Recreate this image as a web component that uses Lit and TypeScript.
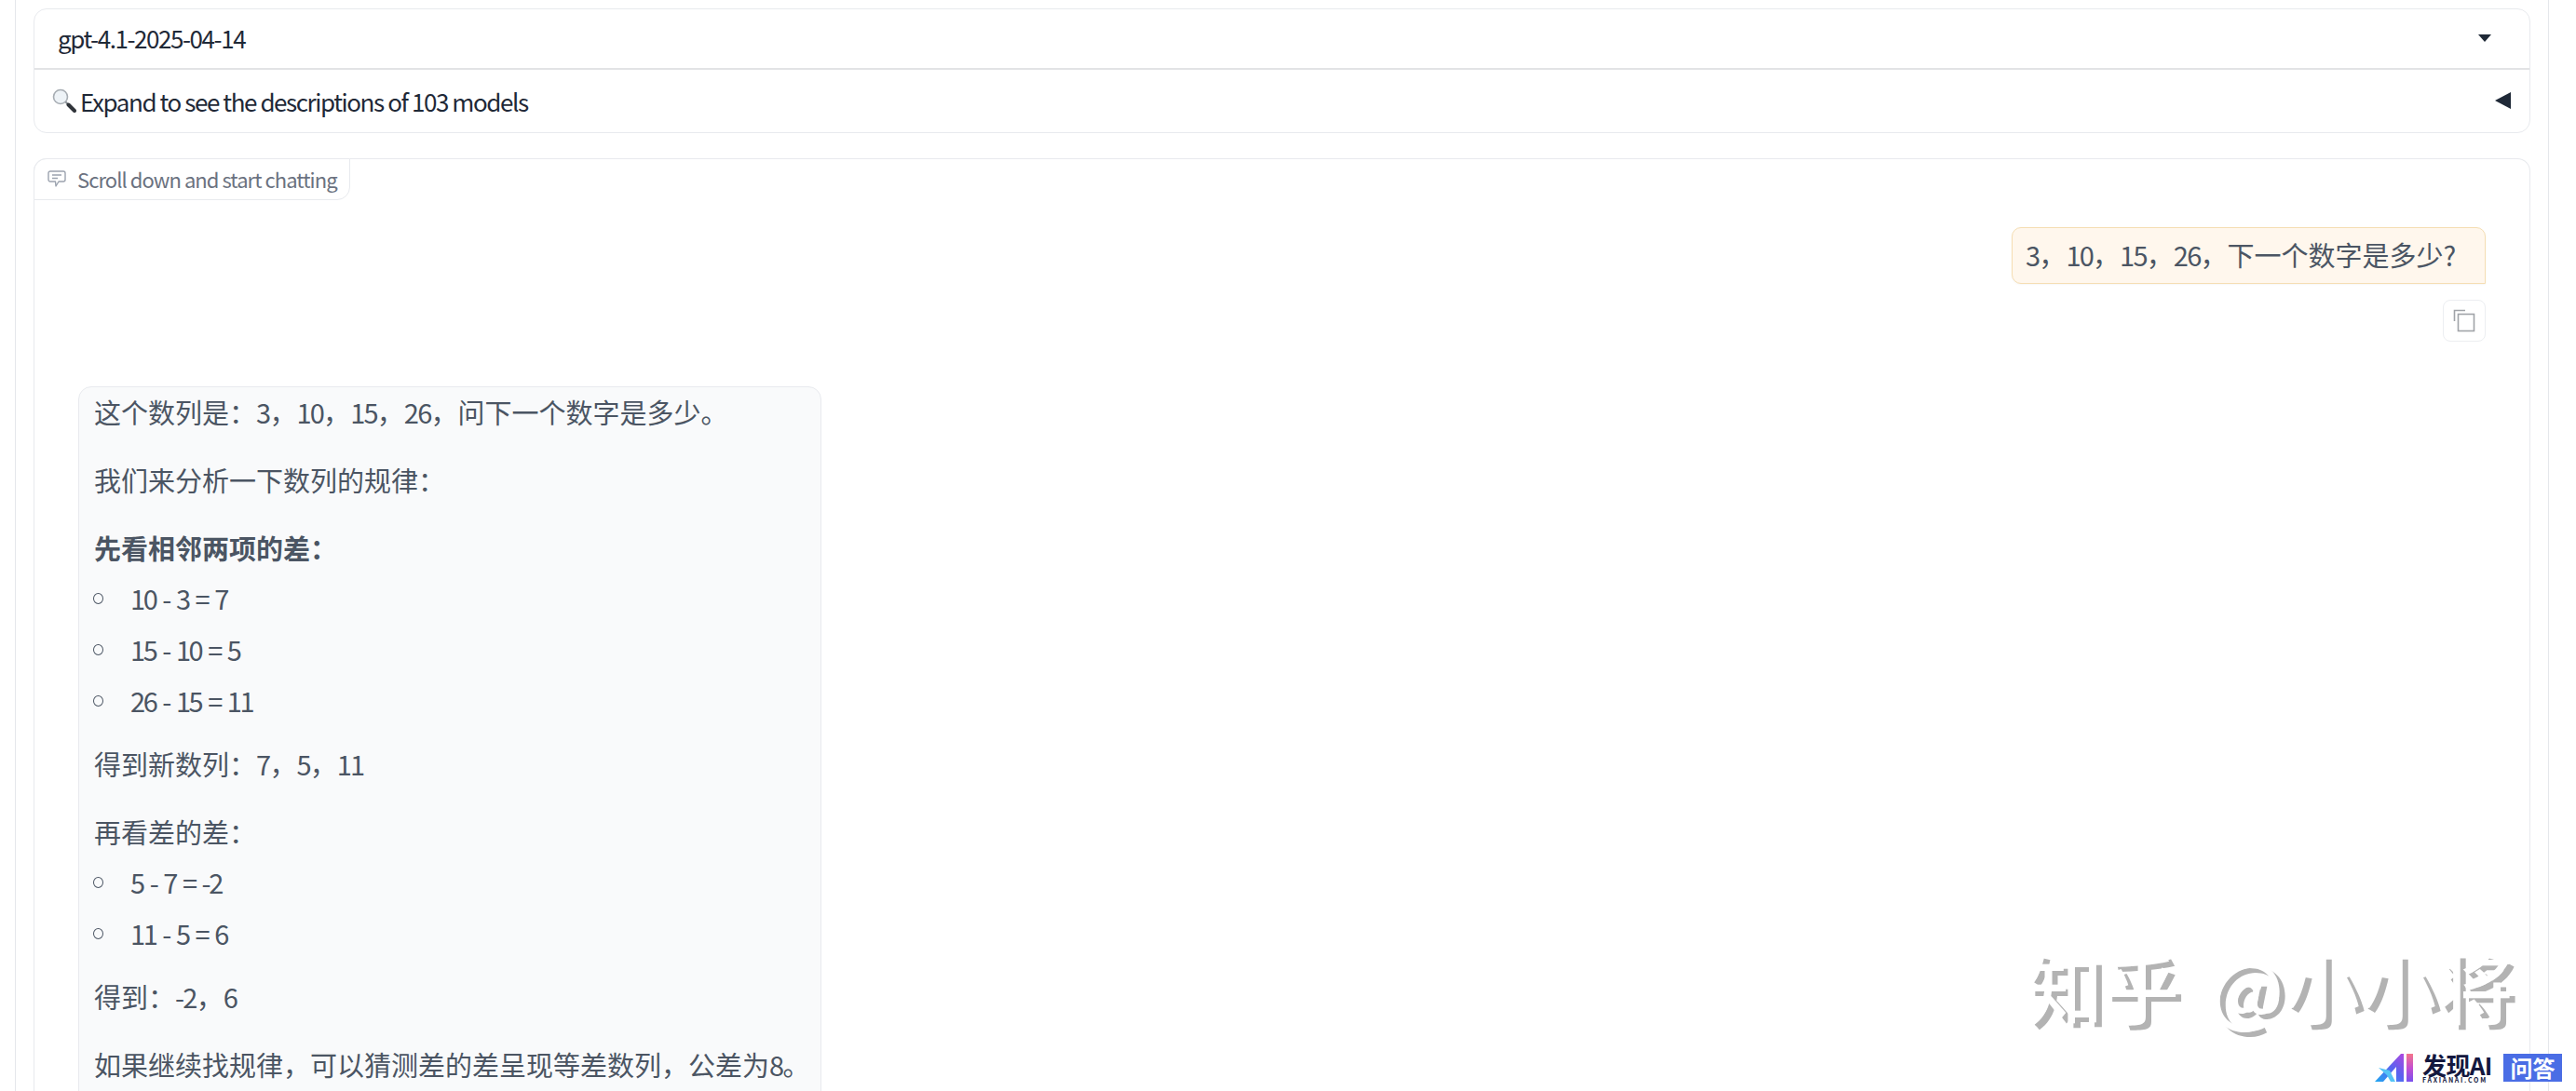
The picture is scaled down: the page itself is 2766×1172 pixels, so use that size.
import { LitElement, html, css } from "lit";
import { customElement } from "lit/decorators.js";

const runs = (text: string) =>
  text
    .split(/([\x20-\x7e]+)/)
    .map((part, i) => (i % 2 ? html`<span class="n">${part}</span>` : part));

@customElement("app-root")
export class AppRoot extends LitElement {
  static styles = css`
    :host {
      display: block;
      height: 1172px;
      overflow: hidden;
      position: relative;
      background: #fff;
      font-family: "Noto Sans CJK SC", "Noto Sans", sans-serif;
      color: #1f2937;
    }
    .page {
      box-sizing: border-box;
      margin: 0 29px 0 16px;
      padding: 9px 19px 0 19px;
      height: 1172px;
      border-left: 1px solid #e5e7eb;
      border-right: 1px solid #e5e7eb;
      display: flex;
      flex-direction: column;
      gap: 27px;
    }
    .card {
      border: 1px solid #e8eaee;
      border-radius: 14px;
      background: #fff;
    }
    .row {
      display: flex;
      align-items: center;
      justify-content: space-between;
      box-sizing: border-box;
      font-size: 26px;
      letter-spacing: -0.055em;
      color: #1f2937;
    }
    .select {
      height: 65px;
      padding: 0 41px 2px 25px;
      border-bottom: 2px solid #e2e3e5;
    }
    .expand {
      height: 67px;
      padding: 0 20px 1px 19px;
    }
    .label {
      display: flex;
      align-items: center;
      gap: 4px;
    }
    .chat {
      flex: 1;
      display: flex;
      flex-direction: column;
      position: relative;
      border-bottom: none;
      border-bottom-left-radius: 0;
      border-bottom-right-radius: 0;
      padding: 73px 47px 0 47px;
    }
    .tab {
      position: absolute;
      left: -1px;
      top: -1px;
      height: 45px;
      width: 340px;
      box-sizing: border-box;
      display: flex;
      align-items: center;
      gap: 12px;
      padding: 0 0 2px 14px;
      font-size: 22px;
      letter-spacing: -0.043em;
      white-space: nowrap;
      color: #6b7280;
      border: 1px solid #e8eaee;
      border-radius: 14px 0 14px 0;
      background: #fff;
    }
    .user-wrap {
      align-self: flex-end;
      display: flex;
      flex-direction: column;
      align-items: flex-end;
      gap: 17px;
    }
    .user {
      box-sizing: border-box;
      height: 61px;
      width: 509px;
      padding: 0 14px 3px;
      display: flex;
      align-items: center;
      font-size: 29px;
      white-space: pre;
      color: #4b5563;
      background: #fff7ed;
      border: 1px solid #f5deb3;
      border-radius: 10px 10px 0 10px;
      box-shadow: 0 1px 2px rgba(0, 0, 0, 0.04);
    }
    .n {
      letter-spacing: -0.06em;
    }
    .copy {
      width: 46px;
      height: 45px;
      box-sizing: border-box;
      border: 1px solid #eceef1;
      border-radius: 8px;
      display: flex;
      align-items: center;
      justify-content: center;
    }
    .bot {
      margin-top: 48px;
      width: 798px;
      box-sizing: border-box;
      padding: 0 16px;
      background: #f9fafb;
      border: 1px solid #e8eaee;
      border-radius: 14px 14px 0 0;
      font-size: 29px;
      line-height: 42px;
      color: #4b5563;
      flex: 1;
    }
    .bot p {
      margin: 31px 0;
      white-space: nowrap;
    }
    .bot p:first-child {
      margin-top: 5px;
    }
    .bot ul + p {
      margin-top: 20px;
    }
    .bot ul {
      list-style: none;
      margin: -26px 0 0;
      padding: 0;
    }
    .bot li {
      height: 55px;
      display: flex;
      align-items: center;
      gap: 29px;
    }
    .bot li span {
      letter-spacing: -0.085em;
      word-spacing: 3px;
    }
    .bot li i {
      width: 11px;
      height: 12px;
      margin: 2px 0 0 -1px;
      border: 1px solid #4b5563;
      border-radius: 50%;
      box-sizing: border-box;
    }
    .bot b {
      font-weight: 700;
    }
    .mark {
      position: absolute;
      left: 2176px;
      top: 1005px;
      font-size: 82px;
      line-height: 108px;
      white-space: pre;
      color: #fff;
      font-weight: 500;
      word-spacing: 14px;
      text-shadow: 6px 5px 0 #b3b3b3;
    }
    .logo {
      position: absolute;
      left: 2550px;
      top: 1132px;
      display: flex;
      align-items: flex-start;
    }
    .mark-ai {
      display: block;
    }
    .brand {
      display: flex;
      flex-direction: column;
      width: 74px;
      margin-left: 10px;
      color: #14183f;
    }
    .brand span {
      font-size: 26px;
      line-height: 24px;
      font-weight: 700;
      letter-spacing: -0.6px;
      white-space: nowrap;
      height: 24px;
      margin-bottom: 1px;
    }
    .brand small {
      font-size: 7px;
      line-height: 6px;
      font-weight: 700;
      letter-spacing: 1.7px;
      white-space: nowrap;
    }
    .qa {
      width: 63px;
      height: 30px;
      margin-left: 13px;
      background: #4a6de5;
      color: #fff;
      font-size: 24px;
      line-height: 30px;
      text-align: center;
      font-weight: 700;
      white-space: nowrap;
    }
  `;

  render() {
    return html`
      <div class="page">
        <div class="card">
          <div class="row select">
            <span>gpt-4.1-2025-04-14</span>
            <svg width="14" height="8" viewBox="0 0 14 8"><path d="M0 0H14L7 8Z" fill="#1f2937"/></svg>
          </div>
          <div class="row expand">
            <span class="label">
              <svg width="26" height="26" viewBox="0 0 26 26">
                <circle cx="9" cy="9" r="7.5" fill="#eef3f7" stroke="#a7adb3" stroke-width="1.6"/>
                <path d="M14.5 14.5L17 17" stroke="#8a9096" stroke-width="2"/>
                <path d="M17.5 17.5L24 24" stroke="#30343a" stroke-width="4" stroke-linecap="round"/>
              </svg>
              <span>Expand to see the descriptions of 103 models</span>
            </span>
            <svg width="17" height="18" viewBox="0 0 17 18"><path d="M17 0V18L0 9Z" fill="#1f2937"/></svg>
          </div>
        </div>
        <div class="card chat">
          <div class="tab">
            <svg width="20" height="18" viewBox="0 0 20 18" fill="none" stroke="#9ca3af" stroke-width="1.4" stroke-linejoin="round">
              <path d="M3 1H17A2 2 0 0 1 19 3V10A2 2 0 0 1 17 12H12L9 17L8.5 12H3A2 2 0 0 1 1 10V3A2 2 0 0 1 3 1Z"/>
              <path d="M5 5H15M5 8.5H11"/>
            </svg>
            <span>Scroll down and start chatting</span>
          </div>
          <div class="user-wrap">
            <div class="user"><span>${runs("3，10，15，26，下一个数字是多少?")}</span></div>
            <div class="copy">
              <svg width="24" height="25" viewBox="0 0 24 25" fill="none" stroke="#a0a3a8" stroke-width="1.6">
                <path d="M1.5 13V1.5H13"/><rect x="5.5" y="5.5" width="17" height="18"/>
              </svg>
            </div>
          </div>
          <div class="bot">
            <p>${runs("这个数列是：3，10，15，26，问下一个数字是多少。")}</p>
            <p>我们来分析一下数列的规律：</p>
            <p><b>先看相邻两项的差：</b></p>
            <ul>
              <li><i></i><span>10 - 3 = 7</span></li>
              <li><i></i><span>15 - 10 = 5</span></li>
              <li><i></i><span>26 - 15 = 11</span></li>
            </ul>
            <p>${runs("得到新数列：7，5，11")}</p>
            <p>再看差的差：</p>
            <ul>
              <li><i></i><span>5 - 7 = -2</span></li>
              <li><i></i><span>11 - 5 = 6</span></li>
            </ul>
            <p>${runs("得到：-2，6")}</p>
            <p>${runs("如果继续找规律，可以猜测差的差呈现等差数列，公差为8。")}</p>
          </div>
        </div>
      </div>
      <div class="mark">知乎 @小小将</div>
      <div class="logo">
        <svg class="mark-ai" width="41" height="30" viewBox="0 0 41 30">
          <defs>
            <linearGradient id="a" x1="0" y1="1" x2="1" y2="0">
              <stop offset="0" stop-color="#1fa8f0"/><stop offset="0.55" stop-color="#5a62f0"/><stop offset="1" stop-color="#b048e0"/>
            </linearGradient>
            <linearGradient id="i" x1="0" y1="0" x2="0" y2="1">
              <stop offset="0" stop-color="#f4768a"/><stop offset="0.5" stop-color="#c54fd0"/><stop offset="1" stop-color="#7a50ee"/>
            </linearGradient>
          </defs>
          <path d="M0 30L28 0H31V30H23V14L9 30Z" fill="url(#a)"/>
          <path d="M4 15L16 18L22 30H17L13 23Z" fill="#55c4f5"/>
          <rect x="34" y="0" width="7" height="30" fill="url(#i)"/>
        </svg>
        <div class="brand"><span>发现AI</span><small>FAXIANAI.COM</small></div>
        <div class="qa">问答</div>
      </div>
    `;
  }
}
